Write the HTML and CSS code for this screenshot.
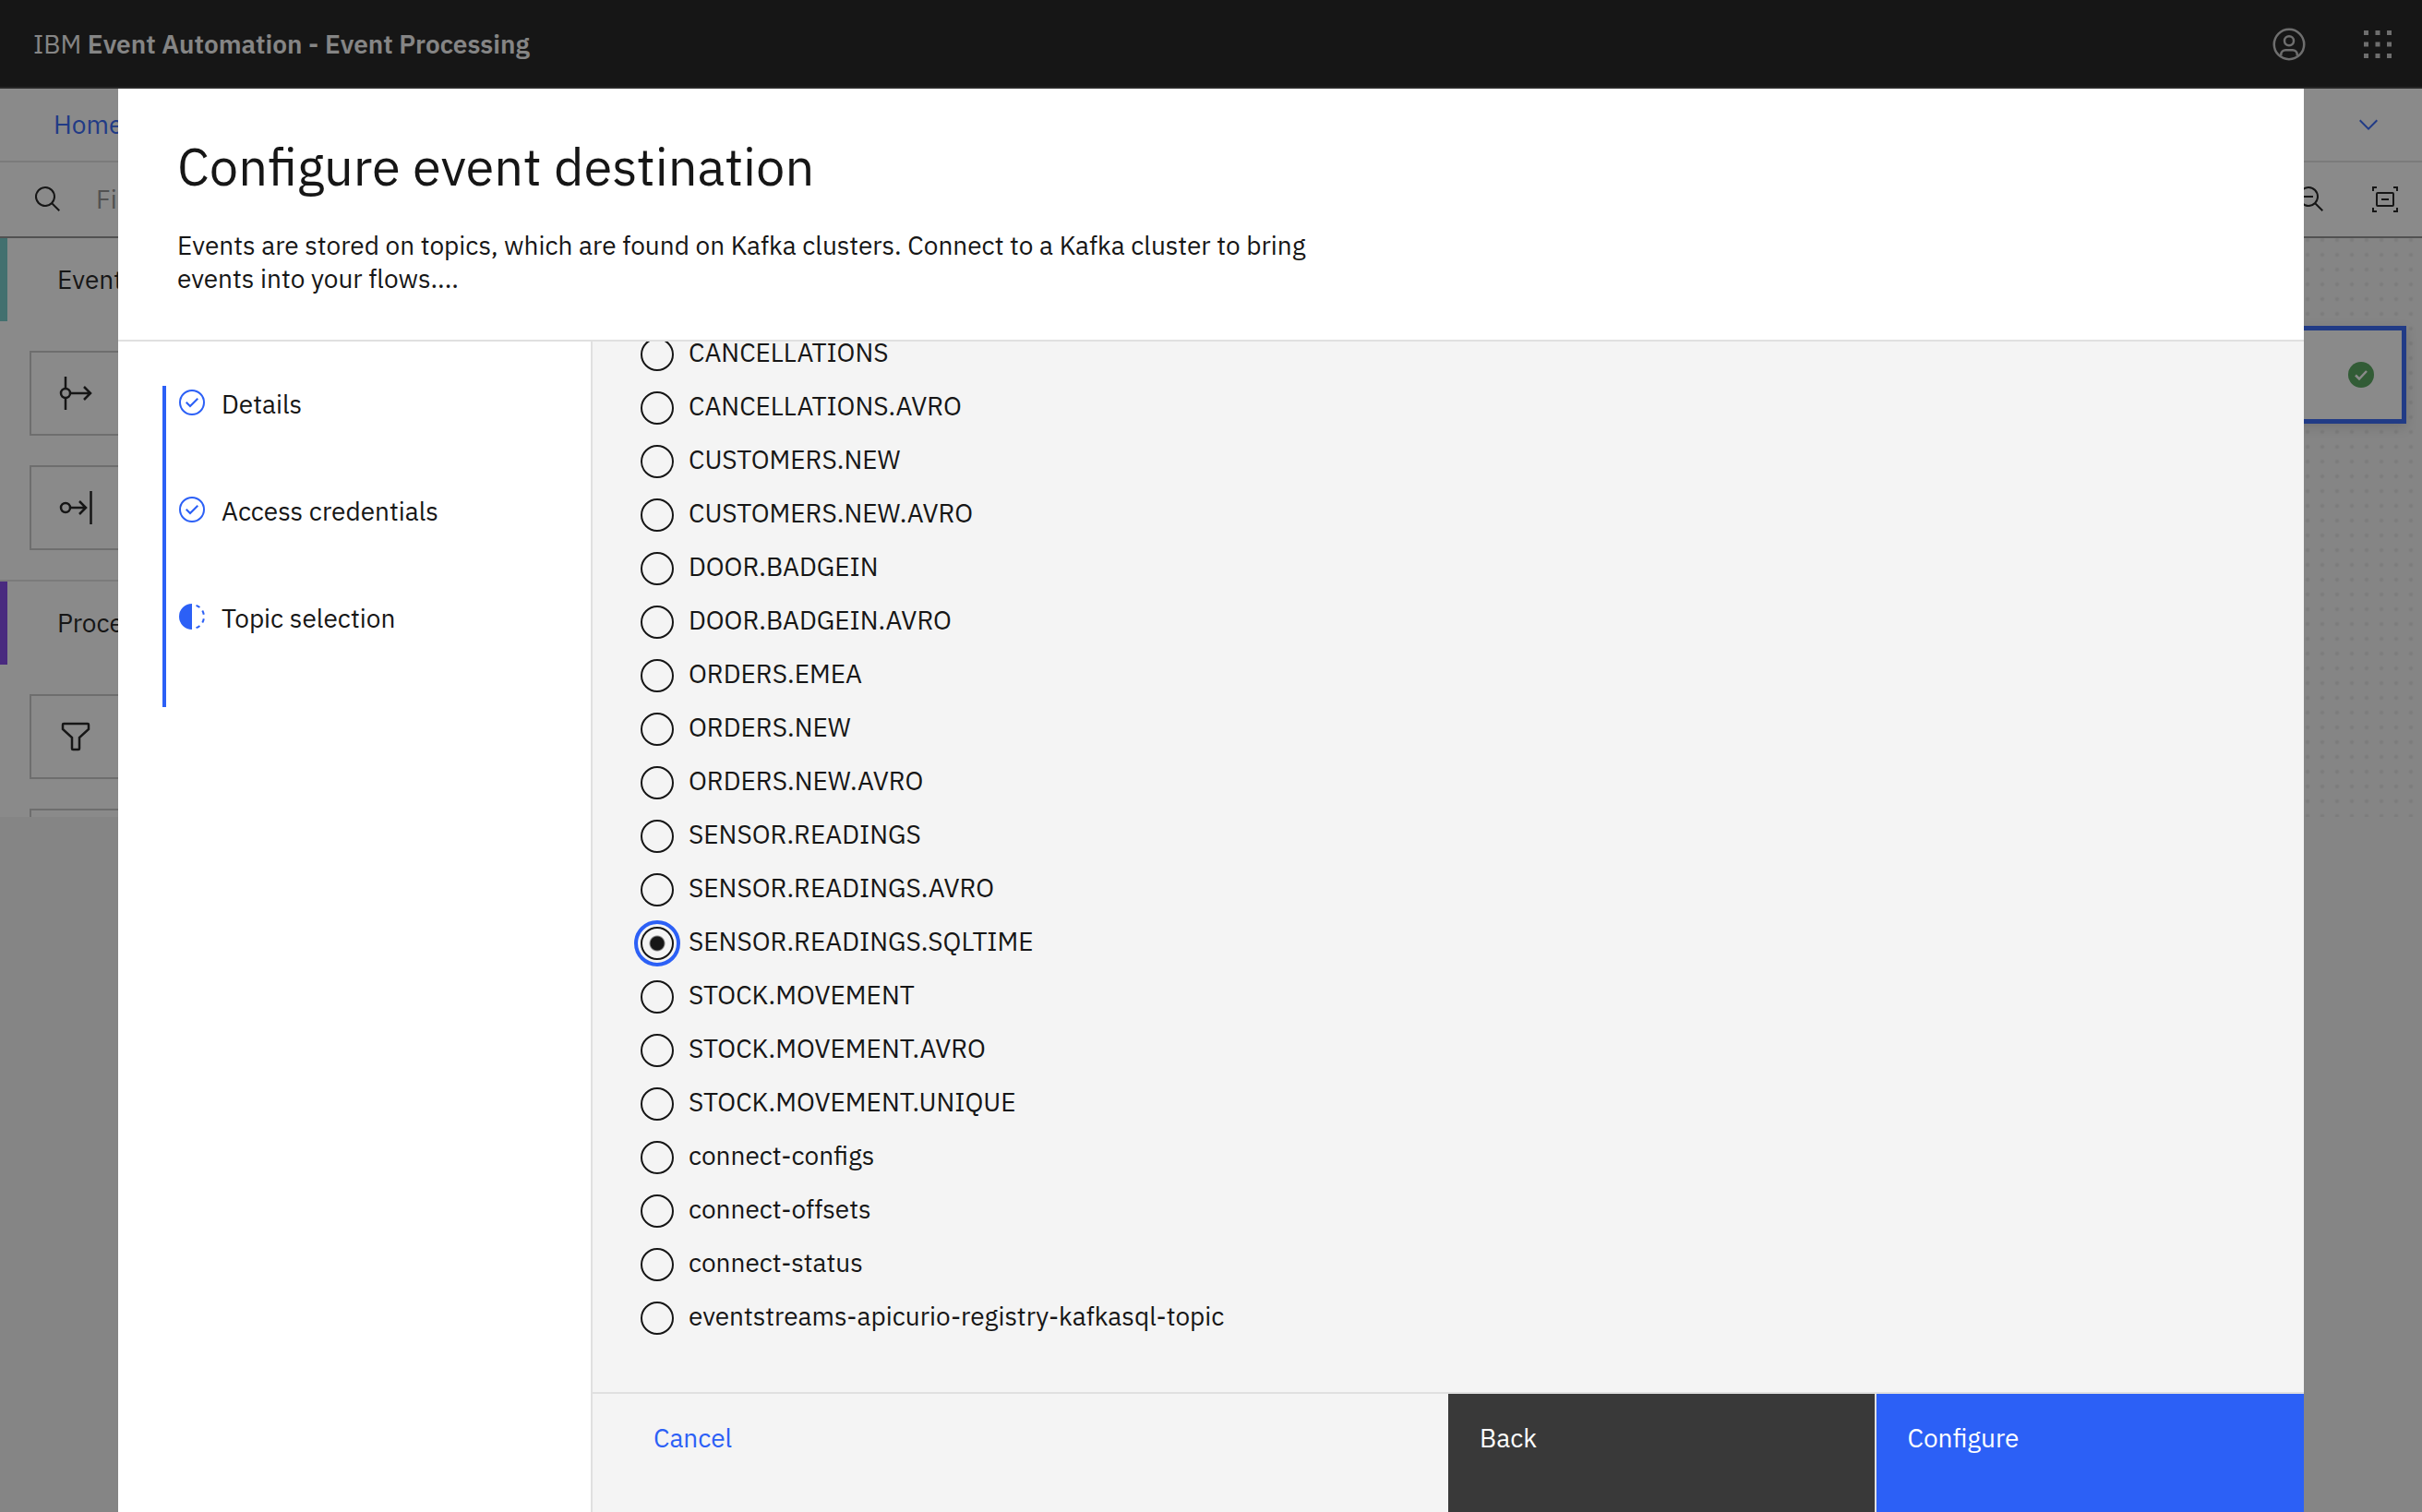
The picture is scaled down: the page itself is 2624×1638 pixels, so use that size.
FILE: index.html
```html
<!DOCTYPE html>
<html lang="en">
<head>
<meta charset="utf-8">
<title>IBM Event Automation - Event Processing</title>
<meta name="viewport" content="width=device-width, initial-scale=1">
<link rel="stylesheet" href="styles.css">
</head>
<body>
<div class="app">
  <header class="topbar">
    <div class="brand">IBM <strong>Event Automation - Event Processing</strong></div>
    <div class="topbar-actions">
      <button class="icon-button" type="button" aria-label="User profile">
        <svg class="icon-large" viewBox="0 0 32 32" fill="none" stroke="currentColor" stroke-width="2"><circle cx="16" cy="16" r="13"/><circle cx="16" cy="13" r="4"/><path d="M9 26v-1a4 4 0 0 1 4-4h6a4 4 0 0 1 4 4v1"/></svg>
      </button>
      <button class="icon-button" type="button" aria-label="App switcher">
        <svg class="icon-large" viewBox="0 0 32 32" fill="currentColor"><path d="M4 4h4v4H4zM14 4h4v4h-4zM24 4h4v4h-4zM4 14h4v4H4zM14 14h4v4h-4zM24 14h4v4h-4zM4 24h4v4H4zM14 24h4v4h-4zM24 24h4v4h-4z"/></svg>
      </button>
    </div>
  </header>
  <nav class="breadcrumb">
    <a href="#">Home</a>
    <button class="icon-button link-color" type="button" aria-label="Expand">
      <svg class="icon" viewBox="0 0 32 32" fill="currentColor"><path d="M16 22 6 12l1.4-1.4 8.6 8.6 8.6-8.6L26 12z"/></svg>
    </button>
  </nav>
  <div class="toolbar">
    <svg class="icon" viewBox="0 0 32 32" fill="currentColor"><path d="M29 27.586l-7.552-7.552a11.018 11.018 0 1 0-1.414 1.414L27.586 29ZM4 13a9 9 0 1 1 9 9 9.01 9.01 0 0 1-9-9Z"/></svg>
    <input class="filter" type="text" placeholder="Filter" aria-label="Filter">
    <div class="tools">
      <button class="icon-button" type="button" aria-label="Zoom out">
        <svg class="icon" viewBox="0 0 32 32" fill="currentColor"><path d="M8 12h10v2H8zM29 27.586l-7.552-7.552a11.018 11.018 0 1 0-1.414 1.414L27.586 29ZM4 13a9 9 0 1 1 9 9 9.01 9.01 0 0 1-9-9Z"/></svg>
      </button>
      <button class="icon-button" type="button" aria-label="Fit to screen">
        <svg class="icon" viewBox="0 0 32 32" fill="none" stroke="currentColor" stroke-width="2"><path d="M3 7V3h4M25 3h4v4M29 25v4h-4M7 29H3v-4M12 16h8"/><rect x="7" y="9" width="18" height="14" rx="1"/></svg>
      </button>
    </div>
  </div>
  <div class="workspace">
    <aside class="palette">
      <section class="palette-group">
        <h2 class="palette-title events">Events</h2>
        <div class="tile"><svg class="icon-large" viewBox="0 0 40 40" fill="none" stroke="currentColor" stroke-width="2.5"><circle cx="9" cy="20" r="5"/><path d="M9 2v13M9 25v13M14 20h22M29 13l7 7-7 7"/></svg></div>
        <div class="tile"><svg class="icon-large" viewBox="0 0 40 40" fill="none" stroke="currentColor" stroke-width="2.5"><circle cx="9" cy="20" r="5"/><path d="M14 20h17M24 13l7 7-7 7M36.500 2v36"/></svg></div>
      </section>
      <section class="palette-group">
        <h2 class="palette-title processors">Processors</h2>
        <div class="tile"><svg class="icon-large" viewBox="0 0 40 40" fill="none" stroke="currentColor" stroke-width="2.5"><path d="M7 6h26a1 1 0 0 1 1 1v5l-10 9v12a1 1 0 0 1-1 1h-6a1 1 0 0 1-1-1V21L6 12V7a1 1 0 0 1 1-1z"/></svg></div>
        <div class="tile"></div>
      </section>
    </aside>
    <main class="canvas">
      <div class="node">
        <svg class="icon" viewBox="0 0 32 32"><circle cx="16" cy="16" r="14" fill="#4ea256"/><path d="M10 16.500l4 4L22 12" fill="none" stroke="#fff" stroke-width="2.5"/></svg>
      </div>
    </main>
  </div>
</div>

<div class="overlay">
  <form class="modal" role="dialog" aria-modal="true" aria-labelledby="modal-title">
    <header class="modal-header">
      <h1 id="modal-title">Configure event destination</h1>
      <p>Events are stored on topics, which are found on Kafka clusters. Connect to a Kafka cluster to bring<br>events into your flows....</p>
    </header>
    <div class="modal-body">
      <ol class="steps">
        <li><svg class="icon" viewBox="0 0 32 32" fill="currentColor"><path d="M14 21.414 9 16.413 10.413 15 14 18.586 21.585 11 23 12.415z"/><path d="M16 2a14 14 0 1 0 14 14A14 14 0 0 0 16 2Zm0 26a12 12 0 1 1 12-12 12 12 0 0 1-12 12Z"/></svg><span>Details</span></li>
        <li><svg class="icon" viewBox="0 0 32 32" fill="currentColor"><path d="M14 21.414 9 16.413 10.413 15 14 18.586 21.585 11 23 12.415z"/><path d="M16 2a14 14 0 1 0 14 14A14 14 0 0 0 16 2Zm0 26a12 12 0 1 1 12-12 12 12 0 0 1-12 12Z"/></svg><span>Access credentials</span></li>
        <li aria-current="step"><svg class="icon" viewBox="0 0 32 32" fill="currentColor"><path d="M23.764 6.859l1.285-1.531a13.976 13.976 0 0 0-4.182-2.441l-.683 1.878a11.973 11.973 0 0 1 3.580 2.094zM27.810 14l1.968-.413a13.889 13.889 0 0 0-1.638-4.541L26.409 10a12.520 12.520 0 0 1 1.401 4zM20.184 27.235l.683 1.878a13.976 13.976 0 0 0 4.182-2.441l-1.285-1.531a11.973 11.973 0 0 1-3.580 2.094zM26.409 22l1.731 1a14.140 14.140 0 0 0 1.638-4.587l-1.968-.347A12.152 12.152 0 0 1 26.409 22zM16 30V2a14 14 0 0 0 0 28z"/></svg><span>Topic selection</span></li>
      </ol>
      <div class="content">
        <div class="topics" role="radiogroup" aria-label="Topics">
          <label class="topic"><input type="radio" name="topic"><span>CANCELLATIONS</span></label>
          <label class="topic"><input type="radio" name="topic"><span>CANCELLATIONS.AVRO</span></label>
          <label class="topic"><input type="radio" name="topic"><span>CUSTOMERS.NEW</span></label>
          <label class="topic"><input type="radio" name="topic"><span>CUSTOMERS.NEW.AVRO</span></label>
          <label class="topic"><input type="radio" name="topic"><span>DOOR.BADGEIN</span></label>
          <label class="topic"><input type="radio" name="topic"><span>DOOR.BADGEIN.AVRO</span></label>
          <label class="topic"><input type="radio" name="topic"><span>ORDERS.EMEA</span></label>
          <label class="topic"><input type="radio" name="topic"><span>ORDERS.NEW</span></label>
          <label class="topic"><input type="radio" name="topic"><span>ORDERS.NEW.AVRO</span></label>
          <label class="topic"><input type="radio" name="topic"><span>SENSOR.READINGS</span></label>
          <label class="topic"><input type="radio" name="topic"><span>SENSOR.READINGS.AVRO</span></label>
          <label class="topic"><input type="radio" name="topic" checked><span>SENSOR.READINGS.SQLTIME</span></label>
          <label class="topic"><input type="radio" name="topic"><span>STOCK.MOVEMENT</span></label>
          <label class="topic"><input type="radio" name="topic"><span>STOCK.MOVEMENT.AVRO</span></label>
          <label class="topic"><input type="radio" name="topic"><span>STOCK.MOVEMENT.UNIQUE</span></label>
          <label class="topic"><input type="radio" name="topic"><span>connect-configs</span></label>
          <label class="topic"><input type="radio" name="topic"><span>connect-offsets</span></label>
          <label class="topic"><input type="radio" name="topic"><span>connect-status</span></label>
          <label class="topic"><input type="radio" name="topic"><span>eventstreams-apicurio-registry-kafkasql-topic</span></label>
        </div>
        <footer class="actions">
          <button class="action cancel" type="button">Cancel</button>
          <button class="action back" type="button">Back</button>
          <button class="action configure" type="submit">Configure</button>
        </footer>
      </div>
    </div>
  </form>
</div>
</body>
</html>
```

FILE: styles.css
```css
* {
  box-sizing: border-box;
}

body {
  margin: 0;
  background: #f4f4f4;
  color: #161616;
  font-family: "IBM Plex Sans", "Open Sans", sans-serif;
  font-size: 28px;
  line-height: 36px;
}

h1,
h2,
p,
ol {
  margin: 0;
  padding: 0;
  font-weight: 400;
}

button,
input {
  font: inherit;
}

.icon {
  display: block;
  flex: none;
  width: 32px;
  height: 32px;
}

.icon-large {
  display: block;
  flex: none;
  width: 40px;
  height: 40px;
}

.icon-button {
  padding: 0;
  border: 0;
  background: none;
  color: inherit;
}

/* Application shell */
.app {
  display: flex;
  flex-direction: column;
  height: 54vh;
  overflow: hidden;
}

.topbar {
  display: flex;
  flex: none;
  align-items: center;
  justify-content: space-between;
  height: 96px;
  padding: 0 28px 0 36px;
  background: #161616;
  box-shadow: inset 0 -2px #393939;
  color: #f4f4f4;
}

.brand strong {
  font-weight: 600;
}

.topbar-actions {
  display: flex;
  gap: 56px;
  color: #c6c6c6;
}

.breadcrumb {
  display: flex;
  flex: none;
  align-items: center;
  justify-content: space-between;
  height: 80px;
  padding: 0 42px 0 58px;
  border-bottom: 2px solid #e0e0e0;
  background: #fff;
}

.breadcrumb a,
.link-color {
  color: #2c60f6;
  text-decoration: none;
}

.toolbar {
  display: flex;
  flex: none;
  align-items: center;
  height: 82px;
  padding: 0 24px 0 36px;
  border-bottom: 2px solid #8d8d8d;
  background: #fff;
}

.filter {
  flex: 1;
  min-width: 0;
  padding: 0 36px;
  border: 0;
  background: none;
}

.filter::placeholder {
  color: #8d8d8d;
}

.tools {
  display: flex;
  gap: 48px;
}

.workspace {
  display: flex;
  flex: 1;
  min-height: 0;
}

.palette {
  flex: none;
  width: 512px;
  overflow: hidden;
  background: #fff;
}

.palette-group {
  display: flex;
  flex-direction: column;
  gap: 32px;
  padding-bottom: 32px;
  border-bottom: 2px solid #e0e0e0;
}

.palette-title {
  padding-left: 54px;
  border-left: 8px solid;
  font-size: 28px;
  line-height: 90px;
}

.events {
  border-color: #6fcac8;
}

.processors {
  border-color: #7c3fe8;
}

.tile {
  display: flex;
  align-items: center;
  height: 92px;
  margin: 0 32px;
  padding-left: 28px;
  border: 2px solid #c6c6c6;
}

.canvas {
  display: flex;
  flex: 1;
  align-items: flex-start;
  justify-content: flex-end;
  padding: 95px 17px 0 0;
  background: radial-gradient(circle, #e2e2e2 1px, transparent 3px) right 4px top -6px / 16px 16px #f4f4f4;
}

.node {
  display: flex;
  align-items: center;
  justify-content: flex-end;
  width: 400px;
  height: 106px;
  padding-right: 28px;
  border: 5px solid #2c60f6;
  background: #fff;
  box-shadow: 0 4px 12px #0002;
}

/* Dialog */
.overlay {
  position: fixed;
  inset: 0;
  padding: 96px 128px 0;
  background: rgba(22, 22, 22, 0.5);
}

.modal {
  display: flex;
  flex-direction: column;
  height: 100%;
  background: #fff;
}

.modal-header {
  padding: 46px 64px 48px;
  border-bottom: 2px solid #e0e0e0;
}

.modal-header h1 {
  font-size: 56px;
  line-height: 76px;
}

.modal-header p {
  margin-top: 30px;
}

.modal-body {
  display: grid;
  grid-template-columns: 512px 1fr;
  flex: 1;
  min-height: 0;
}

.steps {
  align-self: start;
  margin: 48px 48px 0;
  border-left: 4px solid #2c60f6;
  list-style: none;
}

.steps li {
  display: flex;
  align-items: flex-start;
  gap: 16px;
  height: 116px;
  padding: 2px 0 0 12px;
}

.steps .icon {
  color: #2c60f6;
}

.content {
  display: flex;
  flex-direction: column;
  min-width: 0;
  min-height: 0;
  border-left: 2px solid #e0e0e0;
  background: #f4f4f4;
}

.topics {
  display: flex;
  flex: 1;
  flex-direction: column;
  justify-content: flex-end;
  gap: 22px;
  min-height: 0;
  padding: 0 52px 62px;
  overflow: hidden;
}

.topic {
  display: flex;
  flex: none;
  gap: 16px;
  height: 36px;
  line-height: 32px;
}

.topic input {
  flex: none;
  width: 36px;
  height: 36px;
  margin: 0;
  border: 2px solid #161616;
  border-radius: 50%;
  appearance: none;
}

.topic input:checked {
  background: radial-gradient(circle, #161616 7px, transparent 9px);
  outline: 4px solid #2c60f6;
  outline-offset: 3px;
}

.actions {
  display: grid;
  grid-template-columns: 2fr 1fr 1fr;
  flex: none;
  height: 130px;
  border-top: 2px solid #e0e0e0;
}

.action {
  display: flex;
  align-items: flex-start;
  padding: 30px 34px;
  border: 0;
  color: #fff;
}

.cancel {
  padding-left: 66px;
  background: none;
  color: #2c60f6;
}

.back {
  border-right: 2px solid #e0e0e0;
  background: #393939;
}

.configure {
  background: #2c60f6;
}
```
